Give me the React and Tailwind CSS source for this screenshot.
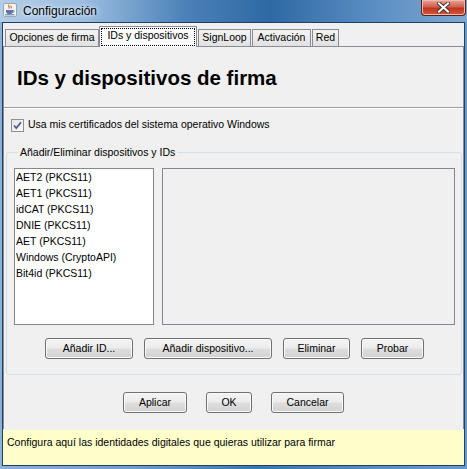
import React from "react";

const ui = "font-['Liberation_Sans',Arial,sans-serif]";

const JavaIcon = () => (
  <svg width="14" height="14" viewBox="0 0 14 14">
    <rect x="0.5" y="0.5" width="13" height="13" rx="1.5" fill="#f4f4f4" stroke="#9aa6b4" />
    <path d="M6 1.8c-1.6 1.4 1.4 2.2-.2 3.8M8.2 2.6c-1 1 .9 1.6-.2 2.8" stroke="#e0701e" strokeWidth="1.2" fill="none" />
    <path d="M3 7h7v1.6c0 1.7-1.4 2.6-3.5 2.6S3 10.3 3 8.6z" fill="#5877a8" />
    <path d="M10 7.4c1.6 0 1.6 2-0.3 2.1" stroke="#5877a8" strokeWidth="0.9" fill="none" />
    <path d="M2 11.8h9.5" stroke="#5877a8" strokeWidth="1" />
  </svg>
);

const Btn = ({ label, w }) => (
  <button
    className={`${w} h-[21px] rounded-[3px] border border-[#707070] bg-[linear-gradient(to_bottom,#f3f3f3_0%,#ececec_48%,#dedede_52%,#d2d2d2_100%)] shadow-[inset_0_0_0_1px_#fafafa] text-[10.5px] text-black leading-none`}
  >
    {label}
  </button>
);

const Tab = ({ label, w, selected }) =>
  selected ? (
    <div className={`${w} h-[21px] -mb-px border border-b-0 border-[#898c95] bg-[#fcfcfc] p-px relative z-10`}>
      <div className="h-full border border-dotted border-black flex items-center justify-center text-[10.5px] text-black pb-[2px]">
        {label}
      </div>
    </div>
  ) : (
    <div
      className={`${w} h-[17px] border border-b-0 border-[#898c95] bg-[linear-gradient(to_bottom,#f4f4f4,#e1e1e1)] flex items-center justify-center text-[10.5px] text-black`}
    >
      {label}
    </div>
  );

const devices = [
  "AET2 (PKCS11)",
  "AET1 (PKCS11)",
  "idCAT (PKCS11)",
  "DNIE (PKCS11)",
  "AET (PKCS11)",
  "Windows (CryptoAPI)",
  "Bit4id (PKCS11)",
];

export default function App() {
  return (
    <div className={`${ui} w-[467px] h-[469px] flex flex-col bg-[linear-gradient(90deg,#8db2d7_0%,#6f9cc9_30%,#3d75ae_55%,#5b8dc0_80%,#6c9bcb_100%)]`}>
      {/* title bar */}
      <div className="h-[22px] flex items-start bg-[linear-gradient(90deg,#b3cde6_0%,#9bbde0_18%,#4a80b8_40%,#2f69a4_58%,#5a8ec3_80%,#7fa8d1_100%)]">
        <div className="ml-[3px] mt-[3px]">
          <JavaIcon />
        </div>
        <span className="ml-[6px] mt-[2px] text-[12px] text-black [text-shadow:0_0_6px_#e8f1fa,0_0_3px_#e8f1fa]">
          Configuración
        </span>
        <div className="ml-auto mr-px w-[45px] h-[16px] rounded-b-[4px] border border-t-0 border-[#5d1d18] bg-[linear-gradient(to_bottom,#e9a799_0%,#d2604d_45%,#c2331d_55%,#d35a3c_100%)] flex items-center justify-center shadow-[inset_0_0_0_1px_#eeb9ae]">
          <svg width="13" height="11" viewBox="0 0 13 11">
            <path d="M2 1.5l9 8M11 1.5l-9 8" stroke="#3a3a3a" strokeWidth="4" strokeLinecap="square" />
            <path d="M2 1.5l9 8M11 1.5l-9 8" stroke="#ffffff" strokeWidth="2" strokeLinecap="square" />
          </svg>
        </div>
      </div>

      {/* window body */}
      <div className="ml-[2px] mr-[2px] mb-[3px] flex-1 border border-[#1f3f63] bg-[#f0f0f0] flex flex-col">
        {/* tabs */}
        <div className="h-[23px] pl-[2px] flex items-end">
          <Tab label="Opciones de firma" w="w-[94px]" />
          <Tab label="IDs y dispositivos" w="w-[98px]" selected />
          <Tab label="SignLoop" w="w-[53px] ml-px" />
          <Tab label="Activación" w="w-[59px] ml-px" />
          <Tab label="Red" w="w-[27px] ml-px" />
        </div>

        {/* tab panel */}
        <div className="flex-1 border-t border-x border-[#898c95] flex flex-col">
          <div className="mt-[19px] h-[24px] pl-[13px] text-[20.5px] leading-[24px] font-bold text-black">
            IDs y dispositivos de firma
          </div>
          <div className="mt-[17px] h-px bg-[#a0a0a0] border-b border-white box-content" />

          <div className="mt-[8px] h-[16px] pl-[7px] flex items-center gap-[4px]">
            <div className="w-[13px] h-[13px] border border-[#8e8f8f] bg-[linear-gradient(135deg,#e4e4e4,#fbfbfb)] flex items-center justify-center">
              <svg width="9" height="9" viewBox="0 0 9 9">
                <path d="M1 4.5l2.3 2.6L8 1.2" stroke="#4a5f97" strokeWidth="1.8" fill="none" />
              </svg>
            </div>
            <span className="text-[10.5px] text-black">Usa mis certificados del sistema operativo Windows</span>
          </div>

          <fieldset className="mt-[13px] ml-[2px] mr-px border border-[#d5dfe5] rounded-[3px] pl-[7px] pr-[6px] pb-[15px]">
            <legend className="ml-[4px] px-[2px] text-[10.5px] text-black leading-[13px]">
              Añadir/Eliminar dispositivos y IDs
            </legend>
            <div className="mt-[9px] flex gap-[8px] h-[157px]">
              <div className="w-[140px] h-full border border-[#828790] bg-white pl-[1px]">
                {devices.map((d) => (
                  <div key={d} className="h-[16px] leading-[16px] text-[10.5px] text-black">
                    {d}
                  </div>
                ))}
              </div>
              <div className="flex-1 h-full border border-[#828790] bg-[#f0f0f0]" />
            </div>
            <div className="mt-[13px] flex justify-center gap-[11px]">
              <Btn label="Añadir ID..." w="w-[88px]" />
              <Btn label="Añadir dispositivo..." w="w-[128px]" />
              <Btn label="Eliminar" w="w-[67px]" />
              <Btn label="Probar" w="w-[63px]" />
            </div>
          </fieldset>

          <div className="mt-[17px] flex justify-center gap-[19px]">
            <Btn label="Aplicar" w="w-[64px]" />
            <Btn label="OK" w="w-[46px]" />
            <Btn label="Cancelar" w="w-[73px]" />
          </div>
        </div>

        {/* status */}
        <div className="h-[36px] bg-[#ffffcc] border-t border-[#f0f0f0] pl-[4px] pt-[5px] text-[10.5px] text-black">
          Configura aquí las identidades digitales que quieras utilizar para firmar
        </div>
      </div>
    </div>
  );
}
